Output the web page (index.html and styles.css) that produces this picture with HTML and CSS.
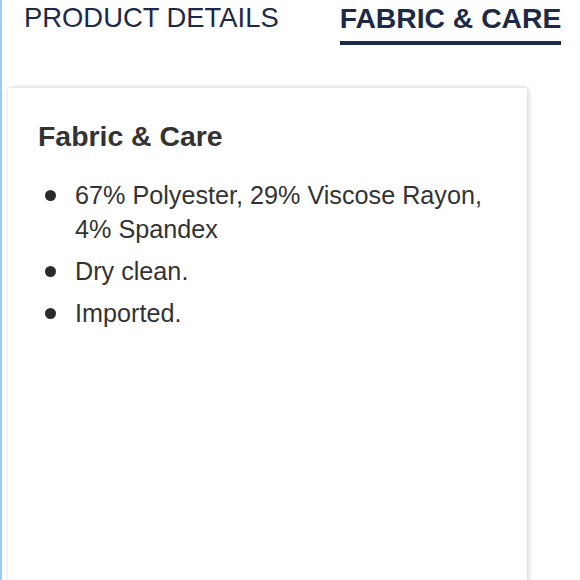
FILE: index.html
```html
<!DOCTYPE html>
<html lang="en">
<head>
<meta charset="utf-8">
<title>Fabric &amp; Care</title>
<link rel="stylesheet" href="styles.css">
</head>
<body>
<div class="page">
  <nav class="tabs">
    <div class="tab">PRODUCT DETAILS</div>
    <div class="tab active">FABRIC &amp; CARE</div>
  </nav>
  <section class="card">
    <h2 class="card-title">Fabric &amp; Care</h2>
    <ul class="care-list">
      <li>67% Polyester, 29% Viscose Rayon, 4% Spandex</li>
      <li>Dry clean.</li>
      <li>Imported.</li>
    </ul>
  </section>
</div>
</body>
</html>
```

FILE: styles.css
```css
html, body {
  margin: 0;
  padding: 0;
  background: #ffffff;
  overflow: hidden;
}

body {
  font-family: "Liberation Sans", Arial, Helvetica, sans-serif;
}

.page {
  min-height: 580px;
  border-left: 2px solid #9fcbf2;
  box-sizing: border-box;
}

.tabs {
  display: flex;
  align-items: flex-start;
  padding-left: 22px;
  gap: 61px;
}

.tab {
  font-size: 27.4px;
  line-height: 32px;
  padding-top: 2px;
  padding-bottom: 7px;
  color: #1c2a48;
  border-bottom: 4px solid transparent;
  white-space: nowrap;
}

.tab.active {
  font-size: 28.3px;
  font-weight: 700;
  border-bottom-color: #1c2a48;
}

.card {
  margin: 43px 0 0 6px;
  width: 519px;
  min-height: 600px;
  box-sizing: border-box;
  padding: 32px 30px 0 30px;
  background: #ffffff;
  box-shadow: 1px 0 5px rgba(0, 0, 0, 0.22);
}

.card-title {
  margin: 0;
  font-size: 28.4px;
  line-height: 32px;
  font-weight: 700;
  color: #333333;
}

.care-list {
  list-style: none;
  margin: 26px 0 0 0;
  padding: 0 0 0 7px;
}

.care-list li {
  display: flex;
  font-size: 25.2px;
  line-height: 34px;
  color: #333333;
  margin-bottom: 8px;
}

.care-list li::before {
  content: "";
  flex: 0 0 11px;
  width: 11px;
  height: 11px;
  border-radius: 50%;
  background: #2b2b2b;
  margin-top: 12px;
  margin-right: 19px;
}
```
